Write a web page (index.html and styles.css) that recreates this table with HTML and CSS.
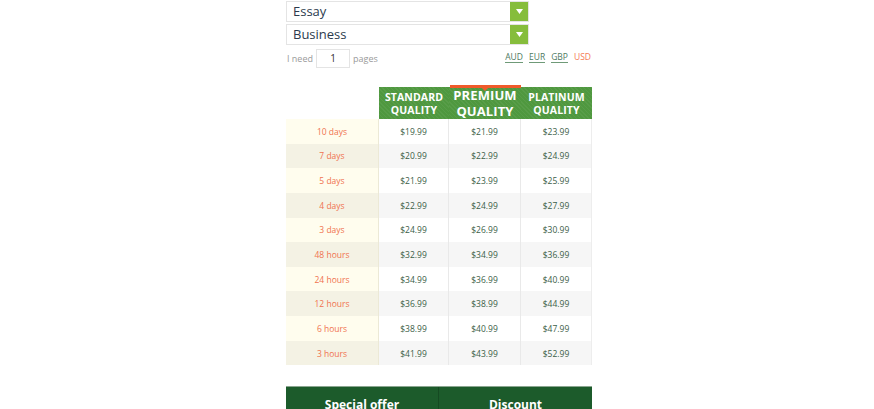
FILE: index.html
```html
<!DOCTYPE html>
<html>
<head>
<meta charset="utf-8">
<link rel="stylesheet" href="styles.css">
</head>
<body>
<div class="page">
  <div class="select"><span class="sel-text">Essay</span><span class="sel-btn"><svg width="7" height="5" viewBox="0 0 7 5"><path d="M0 0h7L3.5 5z" fill="#fff"/></svg></span></div>
  <div class="select"><span class="sel-text">Business</span><span class="sel-btn"><svg width="7" height="5" viewBox="0 0 7 5"><path d="M0 0h7L3.5 5z" fill="#fff"/></svg></span></div>
  <div class="opts">
    <div class="need"><span>I need</span><span class="num">1</span><span>pages</span></div>
    <div class="cur"><span class="c">AUD</span><span class="c">EUR</span><span class="c">GBP</span><span class="c usd">USD</span></div>
  </div>
  <div class="table">
    <div class="row head">
      <div class="cell blank"></div>
      <div class="cell th">STANDARD<br>QUALITY</div>
      <div class="cell th prem">PREMIUM<br>QUALITY</div>
      <div class="cell th">PLATINUM<br>QUALITY</div>
    </div>
    <div class="row"><div class="cell d">10 days</div><div class="cell p">$19.99</div><div class="cell p">$21.99</div><div class="cell p">$23.99</div></div>
    <div class="row"><div class="cell d">7 days</div><div class="cell p">$20.99</div><div class="cell p">$22.99</div><div class="cell p">$24.99</div></div>
    <div class="row"><div class="cell d">5 days</div><div class="cell p">$21.99</div><div class="cell p">$23.99</div><div class="cell p">$25.99</div></div>
    <div class="row"><div class="cell d">4 days</div><div class="cell p">$22.99</div><div class="cell p">$24.99</div><div class="cell p">$27.99</div></div>
    <div class="row"><div class="cell d">3 days</div><div class="cell p">$24.99</div><div class="cell p">$26.99</div><div class="cell p">$30.99</div></div>
    <div class="row"><div class="cell d">48 hours</div><div class="cell p">$32.99</div><div class="cell p">$34.99</div><div class="cell p">$36.99</div></div>
    <div class="row"><div class="cell d">24 hours</div><div class="cell p">$34.99</div><div class="cell p">$36.99</div><div class="cell p">$40.99</div></div>
    <div class="row"><div class="cell d">12 hours</div><div class="cell p">$36.99</div><div class="cell p">$38.99</div><div class="cell p">$44.99</div></div>
    <div class="row"><div class="cell d">6 hours</div><div class="cell p">$38.99</div><div class="cell p">$40.99</div><div class="cell p">$47.99</div></div>
    <div class="row"><div class="cell d">3 hours</div><div class="cell p">$41.99</div><div class="cell p">$43.99</div><div class="cell p">$52.99</div></div>
  </div>
  <div class="offer">
    <div class="oc">Special offer</div>
    <div class="oc">Discount</div>
  </div>
</div>
</body>
</html>
```
FILE: styles.css
```css
html, body { margin: 0; padding: 0; background: #fff; }
body { font-family: "Open Sans", "Noto Sans", sans-serif; overflow: hidden; }
.page { width: 306px; margin-left: 286px; padding-top: 1px; }
.select {
  width: 243px; height: 21px; box-sizing: border-box;
  border: 1px solid #e4e4e4; display: flex; align-items: center;
  justify-content: space-between; margin-bottom: 2px; padding: 0 0 0 6px;
}
.sel-text { font-size: 13px; color: #2b3a4d; line-height: 19px; }
.sel-btn {
  width: 18px; height: 19px; background: #86bd3c; display: flex;
  align-items: center; justify-content: center;
}
.opts { display: flex; justify-content: space-between; align-items: center; margin-top: 1px; height: 22px; }
.need { display: flex; align-items: center; gap: 3px; font-size: 9px; color: #9a9a9a; padding-left: 1px; }
.num {
  width: 34px; height: 19px; box-sizing: border-box; border: 1px solid #e4e4e4;
  display: flex; align-items: center; justify-content: center; color: #333; font-size: 10px;
}
.cur { display: flex; gap: 6px; font-size: 8.5px; padding-right: 1px; padding-bottom: 2px; }
.c { color: #4e7a5f; border-bottom: 1px solid #6f9a78; line-height: 11px; }
.c.usd { color: #f47a55; border-bottom: none; }
.table { margin-top: 18px; }
.row { display: grid; grid-template-columns: 93px 70px 72px 71px; height: 24.65px; }
.row.head { height: 32px; }
.cell {
  display: flex; align-items: center; justify-content: center; font-size: 8.5px;
  border-right: 1px solid #e9e9e9; box-sizing: border-box;
}
.cell:last-child { border-right: 1px solid #ededed; }
.blank { border: none !important; background: #fff; }
.th {
  background-color: #4f983f;
  background-image: repeating-linear-gradient(45deg, rgba(255,255,255,0.05) 0 1px, rgba(0,0,0,0) 1px 3px);
  color: #fff; font-weight: 700; font-size: 10.5px; line-height: 13px; text-align: center;
  border-right: none !important; letter-spacing: 0.1px; padding-top: 1px;
}
.th.prem { font-size: 13px; line-height: 16px; position: relative; padding-top: 0; }
.th.prem::before {
  content: ""; position: absolute; left: 1px; right: 0; top: -2px; height: 3px; background: #f05a2a;
}
.th.prem::after {
  content: ""; position: absolute; left: 50%; top: 1px; margin-left: -3px;
  border-left: 3px solid transparent; border-right: 3px solid transparent; border-top: 3px solid #f05a2a;
}
.d { color: #f07350; background: #fffdee; border-right: 1px solid #ece9d6; }
.p { color: #3b5e47; background: #fff; }
.row:nth-child(odd):not(.head) .d { background: #f4f2e4; }
.row:nth-child(odd):not(.head) .p { background: #f6f6f6; }
.offer {
  margin-top: 21px; display: grid; grid-template-columns: 153px 153px; height: 30px;
  background: #1c5b2b; border-top: 1px solid #8aa58f;
}
.oc {
  color: #fff; font-weight: 700; font-size: 12px; display: flex; justify-content: center;
  padding-top: 9px; border-right: 1px solid #154a22;
}
.oc:last-child { border-right: none; }
```
